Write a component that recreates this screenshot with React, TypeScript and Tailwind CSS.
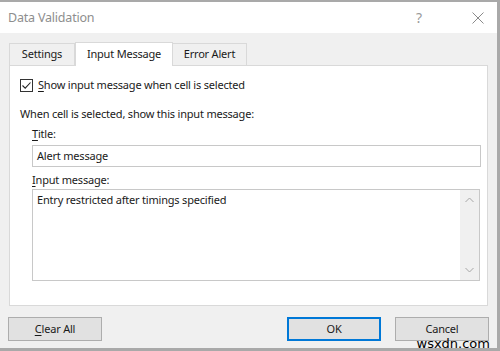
import React from "react";

export default function App() {
  const font = { fontFamily: '"Noto Sans", "Open Sans", sans-serif' };
  return (
    <div className="w-[500px] h-[351px] bg-[#f0f0f0] flex flex-col border-t-2 border-b-[3px] border-r-[3px] border-[#a9a9a9] text-[11px] tracking-[-0.2px] text-[#1a1a1a] overflow-hidden" style={font}>
      {/* title bar */}
      <div className="h-[31px] bg-white flex items-center pl-[8px] shrink-0">
        <span className="text-[12.5px] text-[#8e8e8e] mt-[1px]">Data Validation</span>
        <span className="ml-auto text-[14px] text-[#9a9a9a] mr-[50px]">?</span>
        <svg width="12" height="12" viewBox="0 0 12 12" className="mr-[13px]">
          <path d="M0.5 0.5 L11.5 11.5 M11.5 0.5 L0.5 11.5" stroke="#8a8a8a" strokeWidth="1" />
        </svg>
      </div>

      {/* tabs */}
      <div className="flex items-end pl-[9px] pt-[8px] h-[32px] shrink-0">
        <div className="h-[22px] w-[66px] border border-b-0 border-[#d9d9d9] flex items-center justify-center">Settings</div>
        <div className="h-[24px] w-[98px] bg-white border border-b-0 border-[#d9d9d9] flex items-center justify-center -mb-px relative z-10">Input Message</div>
        <div className="h-[22px] w-[74px] border border-b-0 border-l-0 border-[#d9d9d9] flex items-center justify-center">Error Alert</div>
      </div>

      {/* panel */}
      <div className="ml-[9px] w-[479px] h-[241px] bg-white border border-[#d9d9d9] flex flex-col shrink-0 pl-[10px]">
        <div className="flex items-center mt-[12px] h-[14px]">
          <div className="w-[13px] h-[13px] border border-[#333] flex items-center justify-center">
            <svg width="11" height="11" viewBox="0 0 11 11">
              <path d="M1.5 5.5 L4.2 8.2 L9.5 2.5" stroke="#222" strokeWidth="1.1" fill="none" />
            </svg>
          </div>
          <span className="ml-[5px]"><span className="underline underline-offset-2">S</span>how input message when cell is selected</span>
        </div>
        <div className="mt-[14px] h-[16px] flex items-center">When cell is selected, show this input message:</div>
        <div className="ml-[12px] flex flex-col">
          <div className="mt-[4px] h-[16px] flex items-center"><span><span className="underline underline-offset-2">T</span>itle:</span></div>
          <div className="mt-[3px] w-[449px] h-[22px] border border-[#c8c8c8] flex items-center pl-[4px]">Alert message</div>
          <div className="mt-[5px] h-[16px] flex items-center"><span><span className="underline underline-offset-2">I</span>nput message:</span></div>
          <div className="mt-[1px] w-[448px] h-[92px] border border-[#c8c8c8] flex">
            <div className="flex-1 pl-[4px] pt-[2px]">Entry restricted after timings specified</div>
            <div className="w-[19px] bg-[#f0f0f0] flex flex-col items-center justify-between py-[7px]">
              <svg width="9" height="6" viewBox="0 0 9 6"><path d="M0.5 5 L4.5 1 L8.5 5" stroke="#a6a6a6" strokeWidth="1" fill="none" /></svg>
              <svg width="9" height="6" viewBox="0 0 9 6"><path d="M0.5 1 L4.5 5 L8.5 1" stroke="#a6a6a6" strokeWidth="1" fill="none" /></svg>
            </div>
          </div>
        </div>
      </div>

      {/* buttons */}
      <div className="flex items-center mt-[11px] pl-[8px] relative">
        <div className="w-[94px] h-[24px] bg-[#e1e1e1] border border-[#adadad] flex items-center justify-center"><span><span className="underline underline-offset-2">C</span>lear All</span></div>
        <div className="ml-auto w-[94px] h-[24px] bg-[#e1e1e1] border-2 border-[#0078d7] flex items-center justify-center">OK</div>
        <div className="ml-[14px] mr-[8px] w-[94px] h-[24px] bg-[#e1e1e1] border border-[#adadad] flex items-center justify-center">Cancel</div>
        <div className="absolute right-[7px] top-[20px] text-[13px] tracking-normal text-black leading-none" style={{ fontFamily: '"DejaVu Sans", sans-serif' }}>wsxdn.com</div>
      </div>
    </div>
  );
}
